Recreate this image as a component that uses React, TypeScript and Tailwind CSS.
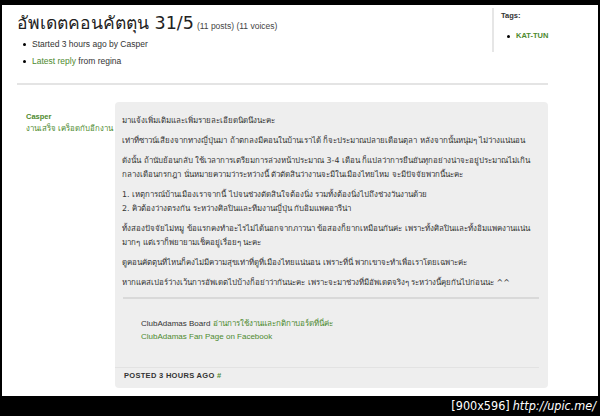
const sans = '"Liberation Sans", "DejaVu Sans", Tahoma, sans-serif'
const thai = '"DejaVu Sans", "Noto Sans", Tahoma, sans-serif'

const paragraphs: string[][] = [
  ['มาแจ้งเพิ่มเติมและเพิ่มรายละเอียดนิดนึงนะคะ'],
  ['เท่าที่ซาวน์เสียงจากทางญี่ปุ่นมา ถ้าตกลงมีคอนในบ้านเราได้ ก็จะประมาณปลายเดือนตุลา หลังจากนั้นหนุ่มๆ ไม่ว่างแน่นอน'],
  [
    'ดังนั้น ถ้านับย้อนกลับ ใช้เวลาการเตรียมการล่วงหน้าประมาณ 3-4 เดือน ก็แปลว่าการยืนยันทุกอย่างน่าจะอยู่ประมาณไม่เกิน',
    'กลางเดือนกรกฎา นั่นหมายความว่าระหว่างนี้ ตัวตัดสินว่างานจะมีในเมืองไทยไหม จะมีปัจจัยพวกนี้นะคะ',
  ],
  [
    '1. เหตุการณ์บ้านเมืองเราจากนี้ ไปจนช่วงตัดสินใจต้องนิ่ง รวมทั้งต้องนิ่งไปถึงช่วงวันงานด้วย',
    '2. คิวต้องว่างตรงกัน ระหว่างศิลปินและทีมงานญี่ปุ่น กับอิมแพคอารีน่า',
  ],
  [
    'ทั้งสองปัจจัยไม่หมู ข้อแรกคงทำอะไรไม่ได้นอกจากภาวนา ข้อสองก็ยากเหมือนกันค่ะ เพราะทั้งศิลปินและทั้งอิมแพคงานแน่น',
    'มากๆ แต่เราก็พยายามเช็คอยู่เรื่อยๆ นะคะ',
  ],
  ['ดูคอนคัตตุนที่ไหนก็คงไม่มีความสุขเท่าที่ดูที่เมืองไทยแน่นอน เพราะที่นี่ พวกเขาจะทำเพื่อเราโดยเฉพาะค่ะ'],
  ['หากแคสเปอร์ว่างเว้นการอัพเดตไปบ้างก็อย่าว่ากันนะคะ เพราะจะมาช่วงที่มีอัพเดตจริงๆ ระหว่างนี้คุยกันไปก่อนนะ ^^'],
]

function Dot() {
  return <span className="h-[3px] w-[3px] shrink-0 rounded-full bg-black" />
}

export default function App() {
  return (
    <div className="flex h-[416px] w-[600px] flex-col bg-black">
      <div
        className="mx-[2px] mt-[5px] h-[391px] overflow-hidden bg-white text-[#333]"
        style={{ fontFamily: sans }}
      >
        {/* topic header + tags */}
        <div className="flex h-[78px]">
          <div className="flex-1 pl-[15px] pt-[6px]">
            <h1 className="flex h-[25px] items-baseline gap-[3px] leading-[25px] text-[#222]">
              <span className="text-[17.5px]" style={{ fontFamily: thai }}>
                อัพเดตคอนคัตตุน 31/5
              </span>
              <span className="text-[8.5px] text-[#444]">(11 posts) (11 voices)</span>
            </h1>
            <ul className="text-[8.5px] leading-[17px]">
              <li className="flex h-[17px] items-center gap-[6px] pl-[6px]">
                <Dot />
                Started 3 hours ago by Casper
              </li>
              <li className="flex h-[17px] items-center gap-[6px] pl-[6px]">
                <Dot />
                <span>
                  <span className="text-[#4d8a2e]">Latest reply</span> from regina
                </span>
              </li>
            </ul>
          </div>
          <div className="mt-[3px] h-[44px] w-[106px] border-l-2 border-[#e6e6e6] pl-[7px] pt-[1px] text-[7.5px] font-bold leading-[14px]">
            <div className="text-[#333]">Tags:</div>
            <div className="mt-[6px] flex items-center gap-[6px] pl-[6px]">
              <Dot />
              <span className="text-[#4d8a2e]">KAT-TUN</span>
            </div>
          </div>
        </div>

        <div className="ml-[15px] h-[2px] w-[531px] bg-[#e4e4e4]" />

        {/* post */}
        <div className="mt-[17px] flex pl-[24px]">
          <div className="w-[89px] pt-[8px]">
            <div className="text-[7.5px] font-bold leading-[13px] text-[#4d8a2e]">Casper</div>
            <div className="text-[7.8px] leading-[12px] text-[#4d8a2e]" style={{ fontFamily: thai }}>
              งานเสร็จ เคร็อดกับอีกงาน
            </div>
          </div>
          <div className="w-[433px] rounded-[4px] bg-[#eeeeee] pt-[12px] text-[#333]">
            <div className="pl-[7px] text-[7.9px] leading-[14px]" style={{ fontFamily: thai }}>
              {paragraphs.map((p, i) => (
                <p key={i} className="mb-[6px] whitespace-nowrap">
                  {p.map((line, j) => (
                    <span key={j} className="block h-[14px]">
                      {line}
                    </span>
                  ))}
                </p>
              ))}
            </div>
            <div className="ml-[8px] mt-[7px] h-[2px] w-[416px] bg-[#d9d9d9]" />
            <div className="pl-[26px] pt-[19px] text-[8px] leading-[12px]">
              <div className="h-[13px]">
                ClubAdamas Board <span className="text-[#4d8a2e]">อ่านการใช้งานและกติกาบอร์ดที่นี่ค่ะ</span>
              </div>
              <div className="h-[12px] text-[#4d8a2e]">ClubAdamas Fan Page on Facebook</div>
            </div>
            <div className="mt-[24px] h-px w-[424px] bg-[#e2e2e2]" />
            <div className="h-[20px] pl-[9px] pt-[3px] text-[7.5px] font-bold uppercase leading-[10px] tracking-[0.3px] text-[#333]">
              Posted 3 hours ago <span className="text-[#4d8a2e]">#</span>
            </div>
          </div>
        </div>
      </div>
      <div
        className="flex h-[20px] items-center justify-end pr-[4px] text-[12.5px] text-white"
        style={{ fontFamily: '"DejaVu Sans Condensed", "DejaVu Sans", sans-serif' }}
      >
        [900x596]<span className="ml-[3px] italic">http://upic.me/</span>
      </div>
    </div>
  )
}
